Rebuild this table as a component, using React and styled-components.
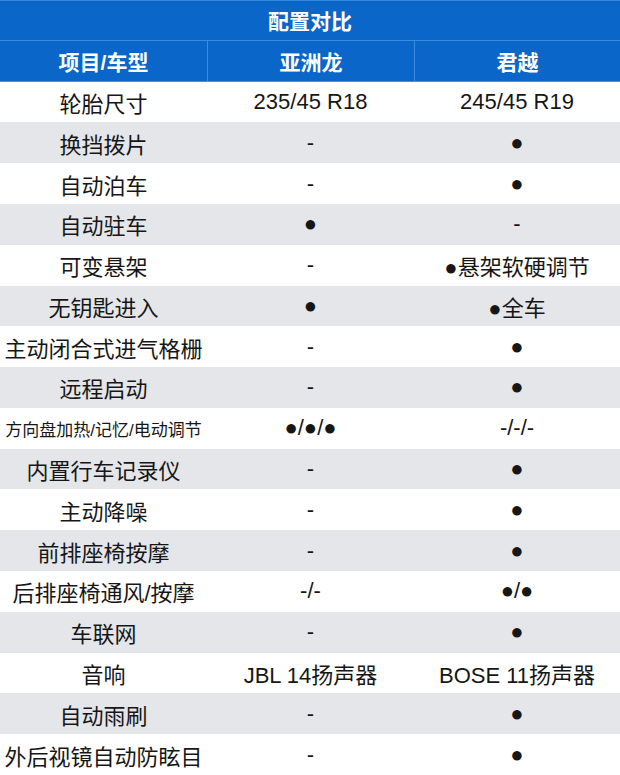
import React from 'react'
import styled, { createGlobalStyle } from 'styled-components'

const rows = [
  ['轮胎尺寸', '235/45 R18', '245/45 R19'],
  ['换挡拨片', '-', '●'],
  ['自动泊车', '-', '●'],
  ['自动驻车', '●', '-'],
  ['可变悬架', '-', '●悬架软硬调节'],
  ['无钥匙进入', '●', '●全车'],
  ['主动闭合式进气格栅', '-', '●'],
  ['远程启动', '-', '●'],
  ['方向盘加热/记忆/电动调节', '●/●/●', '-/-/-', 17],
  ['内置行车记录仪', '-', '●'],
  ['主动降噪', '-', '●'],
  ['前排座椅按摩', '-', '●'],
  ['后排座椅通风/按摩', '-/-', '●/●'],
  ['车联网', '-', '●'],
  ['音响', 'JBL 14扬声器', 'BOSE 11扬声器'],
  ['自动雨刷', '-', '●'],
  ['外后视镜自动防眩目', '-', '●'],
]

const GlobalStyle = createGlobalStyle`
  html, body {
    margin: 0;
    padding: 0;
    background: #ffffff;
  }
  body {
    font-family: "Liberation Sans", "Noto Sans CJK SC", sans-serif;
  }
`

const Table = styled.div`
  width: 620px;
  height: 775px;
  display: grid;
  grid-template-rows: repeat(19, 1fr);
  overflow: hidden;
`

const Title = styled.div`
  background-color: #0a66c8;
  border-top: 1px solid #3585dc;
  border-bottom: 1px solid #3d8be0;
  color: #ffffff;
  font-weight: bold;
  font-size: 21px;
  display: flex;
  justify-content: center;
  align-items: center;
`

const HeadRow = styled.div`
  background-color: #0a66c8;
  border-bottom: 1px solid #4590e2;
  display: grid;
  grid-template-columns: 207px 207px 1fr;
`

const HeadCell = styled.div`
  color: #ffffff;
  font-weight: bold;
  font-size: 21px;
  display: flex;
  justify-content: center;
  align-items: center;
  border-left: ${(p) => (p.first ? 'none' : '1px solid #3d8be0')};
`

const Row = styled.div`
  background-color: ${(p) => (p.shaded ? '#e5e6ea' : '#ffffff')};
  display: grid;
  grid-template-columns: 207px 207px 1fr;
`

const Cell = styled.div`
  color: #161616;
  font-size: ${(p) => p.size || 22}px;
  display: flex;
  justify-content: center;
  align-items: center;
  white-space: nowrap;
`

const App = () => {
  return (
    <>
      <GlobalStyle />
      <Table>
        <Title>配置对比</Title>
        <HeadRow>
          <HeadCell first>项目/车型</HeadCell>
          <HeadCell>亚洲龙</HeadCell>
          <HeadCell>君越</HeadCell>
        </HeadRow>
        {rows.map(([name, a, b, size], i) => (
          <Row key={name} shaded={i % 2 === 1}>
            <Cell size={size}>{name}</Cell>
            <Cell>{a}</Cell>
            <Cell>{b}</Cell>
          </Row>
        ))}
      </Table>
    </>
  )
}

export default App
